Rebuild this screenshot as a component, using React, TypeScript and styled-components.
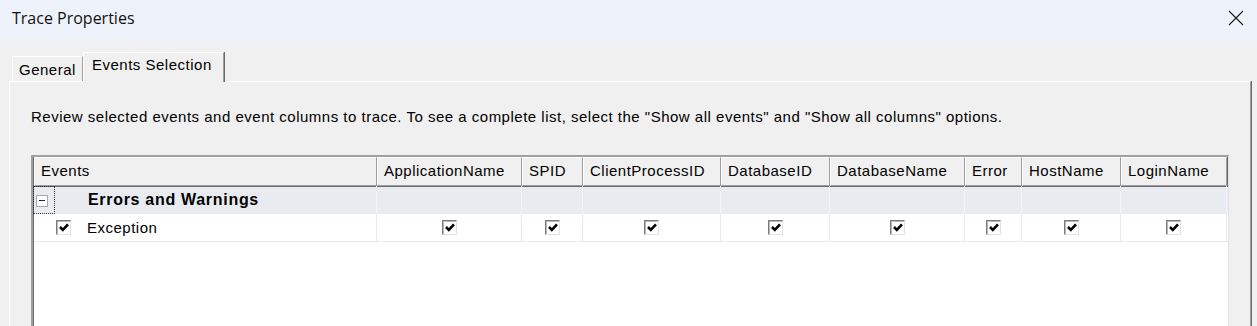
import React from "react";
import styled, { createGlobalStyle } from "styled-components";

type Row = {
    label: string;
    checks: boolean[];
};

const columns: { title: string; width: number }[] = [
    { title: "Events", width: 343 },
    { title: "ApplicationName", width: 145 },
    { title: "SPID", width: 61 },
    { title: "ClientProcessID", width: 138 },
    { title: "DatabaseID", width: 109 },
    { title: "DatabaseName", width: 135 },
    { title: "Error", width: 57 },
    { title: "HostName", width: 99 },
    { title: "LoginName", width: 106 },
];

const template = columns.map((c) => `${c.width}px`).join(" ");

const rows: Row[] = [
    { label: "Exception", checks: [true, true, true, true, true, true, true, true] },
];

// styles
const GlobalStyle = createGlobalStyle`
    html, body {
        margin: 0;
        padding: 0;
        background: #f0f0f0;
        overflow: hidden;
    }
    body {
        font-family: "Liberation Sans", Arial, sans-serif;
        color: #000;
    }
`;

const Window = styled.div`
    width: 1257px;
    height: 326px;
    display: flex;
    flex-direction: column;
    background: #f0f0f0;
    overflow: hidden;
`;

const TitleBar = styled.div`
    height: 40px;
    flex: none;
    box-sizing: border-box;
    display: flex;
    align-items: center;
    justify-content: space-between;
    padding: 0 13px 5px 12px;
    background: #eef2fa;
`;

const Title = styled.span`
    font-family: "Open Sans", "Noto Sans", sans-serif;
    font-size: 16px;
    color: #111;
`;

const CloseButton = styled.span`
    display: flex;
    width: 16px;
    height: 16px;
`;

const Body = styled.div`
    flex: 1;
    display: flex;
    flex-direction: column;
    padding: 12px 4px 0 9px;
    font-size: 15px;
    letter-spacing: 0.5px;
`;

const TabStrip = styled.div`
    display: flex;
    align-items: flex-end;
    height: 29px;
    padding-left: 3px;
`;

const Tab = styled.div<{ $active?: boolean }>`
    box-sizing: border-box;
    height: ${(p) => (p.$active ? "30px" : "25px")};
    margin-bottom: ${(p) => (p.$active ? "-1px" : "0")};
    padding: ${(p) => (p.$active ? "3px 0 0 8px" : "4px 0 0 6px")};
    background: #f0f0f0;
    border-top: 1px solid #fff;
    border-left: 1px solid #fff;
    border-right: 1px solid #a0a0a0;
    box-shadow: 1px 0 0 #696969;
    position: relative;
    z-index: ${(p) => (p.$active ? 2 : 1)};
    width: ${(p) => (p.$active ? "141px" : "71px")};
    white-space: nowrap;
`;

const Panel = styled.div`
    flex: 1;
    display: flex;
    flex-direction: column;
    border-top: 1px solid #fff;
    border-left: 1px solid #fff;
    border-right: 1px solid #a0a0a0;
    box-shadow: 1px 0 0 #696969;
    padding: 26px 23px 0 21px;
    margin-right: 2px;
`;

const Description = styled.p`
    margin: 0 0 29px 0;
    line-height: 18px;
    white-space: nowrap;
`;

const Grid = styled.div`
    flex: 1;
    width: 1194px;
    background: #fff;
    border-top: 2px solid #a0a0a0;
    border-left: 2px solid #a0a0a0;
    box-shadow: inset 1px 1px 0 #696969;
    border-right: 1px solid #e3e3e3;
    padding: 0 0 0 1px;
`;

const HeaderRow = styled.div`
    display: grid;
    grid-template-columns: ${template};
    height: 29px;
`;

const HeaderCell = styled.div`
    box-sizing: border-box;
    display: flex;
    align-items: center;
    padding: 0 0 3px 6px;
    background: #f0f0f0;
    border-top: 1px solid #fff;
    border-left: 1px solid #fff;
    border-right: 1px solid #a0a0a0;
    border-bottom: 1px solid #a0a0a0;
    box-shadow: 1px 1px 0 #696969;
    white-space: nowrap;
    overflow: hidden;
`;

const DataRow = styled.div<{ $group?: boolean }>`
    display: grid;
    grid-template-columns: ${template};
    height: 28px;
    background: ${(p) => (p.$group ? "#e8ecf1" : "#fff")};
    border-bottom: 1px solid ${(p) => (p.$group ? "#e8ecf1" : "#ebebeb")};
    box-sizing: border-box;
`;

const Cell = styled.div<{ $center?: boolean; $group?: boolean }>`
    display: flex;
    align-items: center;
    justify-content: ${(p) => (p.$center ? "center" : "flex-start")};
    padding-bottom: 1px;
    border-right: 1px solid ${(p) => (p.$group ? "#f2f4f7" : "#ebebeb")};
    white-space: nowrap;
`;

const GroupLabel = styled.span`
    font-weight: bold;
    font-size: 16px;
    margin-left: 33px;
    letter-spacing: 0.7px;
`;

const ItemLabel = styled.span`
    margin-left: 16px;
`;

const FocusBox = styled.span`
    box-sizing: border-box;
    width: 22px;
    height: 28px;
    margin: 0 0 -1px -1px;
    display: flex;
    align-items: center;
    justify-content: center;
    border: 1px dotted #333;
`;

const Expander = styled.span`
    box-sizing: border-box;
    width: 12px;
    height: 12px;
    border: 1px solid #a8a8a8;
    background: #fff;
    display: flex;
    align-items: center;
    justify-content: center;
    margin: 1px 5px 0 0;
    &::before {
        content: "";
        width: 6px;
        height: 1px;
        background: #222;
    }
`;

const CheckBox = styled.span<{ $indent?: number }>`
    box-sizing: border-box;
    width: 15px;
    height: 15px;
    margin-left: ${(p) => p.$indent ?? 0}px;
    border-top: 1px solid #7a7a7a;
    border-left: 1px solid #7a7a7a;
    border-right: 1px solid #e2e2e2;
    border-bottom: 1px solid #e2e2e2;
    box-shadow: inset 1px 1px 0 #b8b8b8;
    background: #fff;
    display: flex;
    align-items: center;
    justify-content: center;
`;

const Check = () => (
    <svg width="10" height="9" viewBox="0 0 10 9" style={{ marginTop: 1, marginLeft: 1 }}>
        <path d="M1 4 L3.8 6.8 L9 1.4" fill="none" stroke="#000" strokeWidth="2.6" />
    </svg>
);

// component
const App: React.FC = () => {
    return (
        <Window>
            <GlobalStyle />
            <TitleBar>
                <Title>Trace Properties</Title>
                <CloseButton>
                    <svg width="16" height="16" viewBox="0 0 16 16">
                        <path d="M1 1 L15 15 M15 1 L1 15" stroke="#1a1a1a" strokeWidth="1.1" />
                    </svg>
                </CloseButton>
            </TitleBar>
            <Body>
                <TabStrip>
                    <Tab>General</Tab>
                    <Tab $active>Events Selection</Tab>
                </TabStrip>
                <Panel>
                    <Description>
                        Review selected events and event columns to trace. To see a complete list,
                        select the "Show all events" and "Show all columns" options.
                    </Description>
                    <Grid>
                        <HeaderRow>
                            {columns.map((c) => (
                                <HeaderCell key={c.title}>{c.title}</HeaderCell>
                            ))}
                        </HeaderRow>
                        <DataRow $group>
                            <Cell $group>
                                <FocusBox>
                                    <Expander />
                                </FocusBox>
                                <GroupLabel>Errors and Warnings</GroupLabel>
                            </Cell>
                            {columns.slice(1).map((c) => (
                                <Cell key={c.title} $group />
                            ))}
                        </DataRow>
                        {rows.map((r) => (
                            <DataRow key={r.label}>
                                <Cell>
                                    <CheckBox $indent={22}>
                                        <Check />
                                    </CheckBox>
                                    <ItemLabel>{r.label}</ItemLabel>
                                </Cell>
                                {r.checks.map((on, i) => (
                                    <Cell key={i} $center>
                                        <CheckBox>{on && <Check />}</CheckBox>
                                    </Cell>
                                ))}
                            </DataRow>
                        ))}
                    </Grid>
                </Panel>
            </Body>
        </Window>
    );
};

export default App;
